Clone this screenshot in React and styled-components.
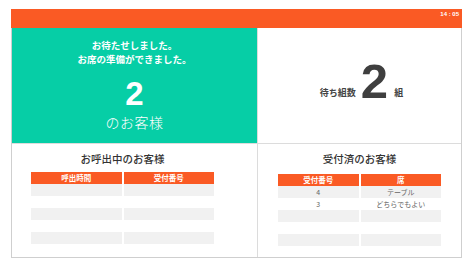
import React from "react";
import styled, { createGlobalStyle } from "styled-components";

const Global = createGlobalStyle`
  html, body { margin: 0; padding: 0; background: #fff; }
  body { font-family: "Noto Sans CJK JP", "Noto Sans", sans-serif; }
  #root { padding: 9px 0 0 11px; }
`;

const Frame = styled.div`
  width: 451px;
  height: 249px;
  box-sizing: border-box;
  border: 1px solid #cfcfcf;
  border-top: none;
  display: flex;
  flex-direction: column;
  background: #fff;
`;

const TopBar = styled.div`
  height: 19px;
  margin: 0 -1px;
  background: #fa5a24;
  display: flex;
  justify-content: flex-end;
  align-items: flex-start;
  padding: 1px 3px 0 0;
  box-sizing: border-box;
`;

const Clock = styled.span`
  color: #fff;
  font-family: "Liberation Sans", sans-serif;
  font-size: 6px;
  font-weight: bold;
  line-height: 8px;
`;

const Grid = styled.div`
  flex: 1;
  display: grid;
  grid-template-columns: 245px 1fr;
  grid-template-rows: 115px 1fr;
  gap: 1px;
  background: #dcdcdc;
`;

const CalledPanel = styled.div`
  background: #06cea6;
  color: #fff;
  display: flex;
  flex-direction: column;
  align-items: center;
  padding-top: 10px;
`;

const Message = styled.div`
  font-size: 9.5px;
  font-weight: bold;
  line-height: 14px;
  text-align: center;
`;

const BigNum = styled.div`
  font-family: "Liberation Sans", "Noto Sans", sans-serif;
  font-weight: bold;
  font-size: 33px;
  line-height: 34px;
  margin-top: 11px;
`;

const Guest = styled.div`
  font-size: 14px;
  font-weight: 300;
  line-height: 18px;
  margin-top: 2px;
  letter-spacing: 0.5px;
`;

const WaitPanel = styled.div`
  background: #fff;
  display: flex;
  justify-content: center;
  align-items: flex-end;
  padding-bottom: 43px;
  padding-left: 4px;
  color: #444;
`;

const WaitLabel = styled.span`
  font-size: 9px;
  font-weight: bold;
  line-height: 12px;
  margin-bottom: 1px;
`;

const WaitNum = styled.span`
  font-family: "Liberation Sans", sans-serif;
  font-size: 49px;
  font-weight: bold;
  line-height: 38px;
  margin: 0 6px 0 5px;
  color: #3f3f3f;
`;

const ListPanel = styled.div`
  background: #fff;
  display: flex;
  flex-direction: column;
  align-items: ${(p) => (p.$offset ? "flex-start" : "center")};
  padding-left: ${(p) => (p.$offset ? "19px" : "0")};
  padding-top: ${(p) => p.$top}px;
`;

const ListTitle = styled.div`
  width: ${(p) => p.$w}px;
  text-align: center;
  font-size: 10.5px;
  font-weight: 500;
  color: #333;
  line-height: 14px;
`;

const Table = styled.div`
  width: ${(p) => p.$w}px;
  margin-top: ${(p) => p.$mt}px;
  display: grid;
  grid-template-columns: 1fr 1fr;
  column-gap: 2px;
`;

const HeadCell = styled.div`
  background: #fa5a24;
  color: #fff;
  font-size: 7.5px;
  font-weight: bold;
  height: 12px;
  line-height: 12px;
  text-align: center;
`;

const Cell = styled.div`
  background: ${(p) => (p.$shade ? "#f1f1f1" : "#fff")};
  color: #666;
  font-size: 7px;
  height: 12px;
  line-height: 12px;
  text-align: center;
`;

function DataTable({ heads, rows, width, mt }) {
  return (
    <Table $w={width} $mt={mt}>
      {heads.map((h) => (
        <HeadCell key={h}>{h}</HeadCell>
      ))}
      {rows.map((r, i) =>
        r.map((c, j) => (
          <Cell key={i + "-" + j} $shade={i % 2 === 0}>
            {c}
          </Cell>
        ))
      )}
    </Table>
  );
}

export default function App() {
  const empty = [["", ""], ["", ""], ["", ""], ["", ""], ["", ""]];
  const accepted = [["4", "テーブル"], ["3", "どちらでもよい"], ["", ""], ["", ""], ["", ""]];
  return (
    <>
      <Global />
      <Frame>
        <TopBar>
          <Clock>14 : 05</Clock>
        </TopBar>
        <Grid>
          <CalledPanel>
            <Message>お待たせしました。</Message>
            <Message>お席の準備ができました。</Message>
            <BigNum>2</BigNum>
            <Guest>のお客様</Guest>
          </CalledPanel>
          <WaitPanel>
            <WaitLabel>待ち組数</WaitLabel>
            <WaitNum>2</WaitNum>
            <WaitLabel>組</WaitLabel>
          </WaitPanel>
          <ListPanel $offset $top={8}>
            <ListTitle $w={183}>お呼出中のお客様</ListTitle>
            <DataTable heads={["呼出時間", "受付番号"]} rows={empty} width={183} mt={6} />
          </ListPanel>
          <ListPanel $top={8}>
            <ListTitle $w={163}>受付済のお客様</ListTitle>
            <DataTable heads={["受付番号", "席"]} rows={accepted} width={163} mt={8} />
          </ListPanel>
        </Grid>
      </Frame>
    </>
  );
}
